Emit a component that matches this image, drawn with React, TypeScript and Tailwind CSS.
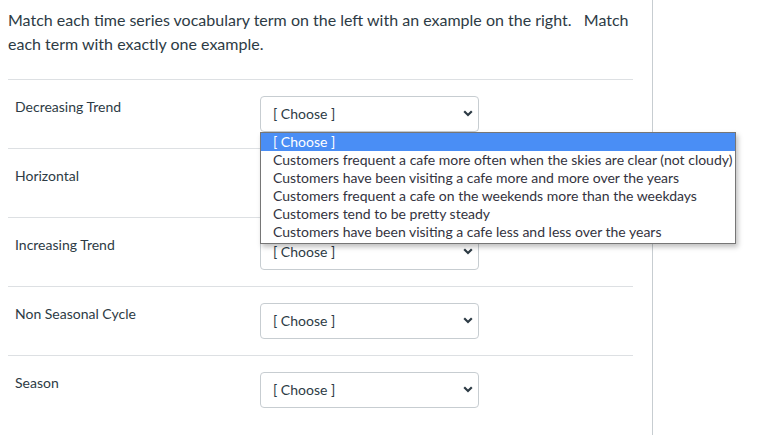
import React from "react";

type Row = { term: string };

const rows: Row[] = [
  { term: "Decreasing Trend" },
  { term: "Horizontal" },
  { term: "Increasing Trend" },
  { term: "Non Seasonal Cycle" },
  { term: "Season" },
];

const options = [
  "[ Choose ]",
  "Customers frequent a cafe more often when the skies are clear (not cloudy)",
  "Customers have been visiting a cafe more and more over the years",
  "Customers frequent a cafe on the weekends more than the weekdays",
  "Customers tend to be pretty steady",
  "Customers have been visiting a cafe less and less over the years",
];

function Chevron() {
  return (
    <svg width="10" height="7" viewBox="0 0 10 7" className="text-[#2d3b45]">
      <path d="M1.2 1.3 L5 5 L8.8 1.3" fill="none" stroke="currentColor" strokeWidth="2.2" />
    </svg>
  );
}

function ChooseBox() {
  return (
    <div className="flex h-[36px] w-[219px] items-center justify-between rounded-[4px] border border-[#c7cdd1] bg-white pb-[2px] pl-[12px] pr-[5px] text-[14px] text-[#2d3b45]">
      <span>[ Choose ]</span>
      <Chevron />
    </div>
  );
}

export default function App() {
  return (
    <div
      className="relative min-h-[435px] w-[653px] border-r border-[#c7cdd1] bg-white text-[#2d3b45]"
      style={{ fontFamily: "Lato, 'Liberation Sans', sans-serif" }}
    >
      <div className="w-[633px] pl-[8px] pt-[8px]">
        <p className="mb-[23px] text-[16px] leading-[24px]">
          Match each time series vocabulary term on the left with an example on the right.&nbsp;&nbsp; Match each
          term with exactly one example.
        </p>

        {rows.map((row, i) => (
          <div key={i} className="flex items-start border-t border-[#dde0e3] py-[16px] pl-[7px]">
            <div className="w-[245px] pt-[1px] text-[14px] leading-[20px]">{row.term}</div>
            <ChooseBox />
          </div>
        ))}
      </div>

      {/* open dropdown list of first select */}
      <div className="absolute left-[260px] top-[132px] w-[476px] border border-[#767676] bg-white pb-[2px] shadow-[2px_3px_5px_rgba(0,0,0,0.25)]">
        {options.map((opt, i) => (
          <div
            key={i}
            className={`h-[18px] whitespace-nowrap pl-[12px] text-[14px] leading-[18px] ${
              i === 0 ? "bg-[#4a8ef5] text-white" : "text-[#333340]"
            }`}
          >
            {opt}
          </div>
        ))}
      </div>
    </div>
  );
}
